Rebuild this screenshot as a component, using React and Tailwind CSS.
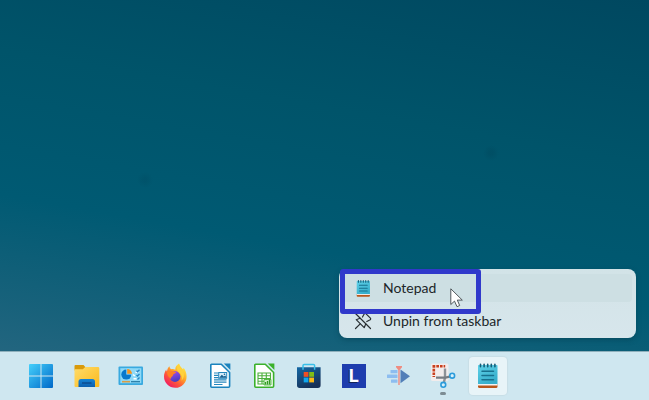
import React from "react";

function Svg({ children, className = "size-7" }) {
  return (
    <svg viewBox="0 0 28 28" className={className} aria-hidden="true">
      {children}
    </svg>
  );
}

function StartIcon() {
  return (
    <Svg>
      <defs>
        <linearGradient id="start" x1="2" y1="2" x2="26" y2="26" gradientUnits="userSpaceOnUse">
          <stop offset="0" stopColor="#45d0fb" />
          <stop offset="1" stopColor="#0068c8" />
        </linearGradient>
      </defs>
      <path fill="url(#start)" d="M3 2h10.500v11.500H2V3a1 1 0 0 1 1-1zM14.500 2H25a1 1 0 0 1 1 1v10.500H14.500zM2 14.500h11.500V26H3a1 1 0 0 1-1-1zM14.500 14.500H26V25a1 1 0 0 1-1 1H14.500z" />
    </Svg>
  );
}

function FolderIcon() {
  return (
    <Svg>
      <defs>
        <linearGradient id="folder" x1="0" y1="0" x2="1" y2="1">
          <stop offset="0" stopColor="#ffdc6a" />
          <stop offset="1" stopColor="#fbb91c" />
        </linearGradient>
        <linearGradient id="tray" x1="0" y1="0" x2="0" y2="1">
          <stop offset="0" stopColor="#1585d6" />
          <stop offset="1" stopColor="#0c5fae" />
        </linearGradient>
      </defs>
      <path fill="#d99a0b" d="M2.500 4a1 1 0 0 1 1-1h8l1.800 2v3.500H2.500z" />
      <path fill="url(#folder)" d="M2.500 7.300h8.300L13.300 5H26a1.300 1.300 0 0 1 1.300 1.300V24a1 1 0 0 1-1 1H3.500a1 1 0 0 1-1-1z" />
      <path fill="url(#tray)" d="M6.500 25v-5.500a2.500 2.500 0 0 1 2.500-2.500h11.500a2.500 2.500 0 0 1 2.500 2.500V25z" />
      <path stroke="#0a4484" strokeWidth="1.200" d="M10 21h9.500" />
    </Svg>
  );
}

function ControlPanelIcon() {
  return (
    <Svg>
      <rect x="2.500" y="4.500" width="24.500" height="18.500" rx="1" fill="#39a9df" />
      <rect x="4.300" y="6.200" width="21" height="15" fill="#8ed9f7" />
      <circle cx="10.300" cy="12.600" r="5" fill="#0878cc" />
      <path fill="#8ed9f7" d="M10.300 12.600V6.500h6v6.100z" />
      <path fill="#f5931f" d="M11.200 11.800V7a4.800 4.800 0 0 1 4.800 4.800z" />
      <path fill="none" stroke="#fff" strokeWidth="1.600" d="m17 12.500 1.800 1.500M17.500 16.800h3M19.500 10.500l3-1" />
      <path fill="none" stroke="#2384c4" strokeWidth="1.300" d="m20.500 8.800 1 1 2-2M20.500 13l1 1 2-2M21.500 17.500l2-2" />
      <path stroke="#d89c45" strokeWidth="1.600" d="M6 19.700h8" />
      <path stroke="#297ea8" strokeWidth="1.300" d="M15 19.700h9" />
    </Svg>
  );
}

function FirefoxIcon() {
  return (
    <Svg>
      <defs>
        <linearGradient id="foxBody" x1="23" y1="4" x2="6" y2="24" gradientUnits="userSpaceOnUse">
          <stop offset="0" stopColor="#fff04b" />
          <stop offset="0.350" stopColor="#ffae27" />
          <stop offset="0.650" stopColor="#ff5a38" />
          <stop offset="1" stopColor="#ef1668" />
        </linearGradient>
        <linearGradient id="foxGlobe" x1="0" y1="0" x2="0.300" y2="1">
          <stop offset="0" stopColor="#a948f0" />
          <stop offset="1" stopColor="#4a3ec0" />
        </linearGradient>
      </defs>
      <path fill="url(#foxBody)" d="M18 1.500c.6 2.700 2.500 3.800 4 5.800.4-.5.500-1 .5-1.500 2 2.200 3.100 5.500 3.100 8.700A11.300 11.300 0 0 1 3 14.600c0-2.800 1-5.200 2.200-7 .1.900.3 1.500.8 2 .2-2.300 1-4 2.500-5.400.1 1.500.8 2.300 1.700 3 1.700-.3 3 0 4.100.5-.3-2.600 1.600-4.900 3.700-6.200z" />
      <circle cx="14" cy="14.500" r="5.400" fill="url(#foxGlobe)" />
      <path fill="#ff8124" d="M6 10.300c2-1.800 4.400-2 6.800-.8 1 .1 2 .2 2.300.8-.4 1.200-2.200 1.400-2.900 2.200-.3.600-.2 1.500-.8 1.700-1 .3-1.400 1.500-1.400 2.800-2-1.500-4-3.500-4-6.700z" />
      <path fill="#ffd23c" d="M18 2c.7 3 3.300 4.700 4.500 7.700 1.200 3 .5 6.800-2 9 1-3.500 0-6.500-2.300-8.200-2.400-1.700-3.300-5.400-.2-8.500z" />
    </Svg>
  );
}

function DocShape({ color, children }) {
  return (
    <Svg>
      <path fill="#fff" stroke={color} strokeWidth="1.600" strokeLinejoin="round" d="M5.500 2.200h9.800l8.300 8.300v13.700a1 1 0 0 1-1 1H5.800a1 1 0 0 1-1-1V2.900z" />
      <path fill={color} d="M17.800 1.400h6.600V8z" />
      {children}
    </Svg>
  );
}

function WriterIcon() {
  return (
    <DocShape color="#1b83bd">
      <path stroke="#2587bd" strokeWidth="1.200" d="M8 11h4.500M8 13.300h4.500M8 15.600h4.500M8 17.900h12.500M8 20.200h12.500M8 22.500h8.500" />
      <rect x="12.700" y="10.500" width="8" height="5.800" fill="#d9eefa" stroke="#2587bd" />
      <path fill="#155f91" d="m13.200 15.800 2.600-3 2 1.800 1.500-1.200 1.300 2.400z" />
      <circle cx="18.500" cy="12.300" r="0.800" fill="#155f91" />
    </DocShape>
  );
}

function CalcIcon() {
  return (
    <DocShape color="#3bb12b">
      <path fill="none" stroke="#4caf3d" strokeWidth="1.100" d="M8 11h12.500v11H8zM8 13.800h12.500M8 16.500h12.500M8 19.200h12.500M12 11v11M16.300 11v11" />
      <path fill="#d3f0cb" stroke="#3bb12b" strokeWidth="0.800" d="M14 17.500h7V23h-7z" />
      <path stroke="#329923" strokeWidth="1.300" d="M15.500 22.500V20M17.500 22.500v-3.500M19.500 22.500v-5" />
    </DocShape>
  );
}

function StoreIcon() {
  return (
    <Svg>
      <defs>
        <linearGradient id="bag" x1="0" y1="0" x2="0.500" y2="1">
          <stop offset="0" stopColor="#1468a5" />
          <stop offset="1" stopColor="#173158" />
        </linearGradient>
      </defs>
      <path fill="url(#bag)" d="M2 5.300h23.600v17.900a2.700 2.700 0 0 1-2.700 2.700H4.700A2.700 2.700 0 0 1 2 23.200z" />
      <path fill="none" stroke="#38bfe8" strokeWidth="1.500" d="M8 7.800V3.600a1.200 1.200 0 0 1 1.200-1.200h9.200a1.200 1.200 0 0 1 1.200 1.200v4.200" />
      <path fill="#f04f24" d="M8.700 10h4.700v4.800H8.700z" />
      <path fill="#80bc16" d="M14.200 10H19v4.800h-4.800z" />
      <path fill="#10a7ee" d="M8.700 15.600h4.700v4.800H8.700z" />
      <path fill="#fcb813" d="M14.200 15.600H19v4.800h-4.800z" />
    </Svg>
  );
}

function LetterIcon() {
  return (
    <span className="flex size-6 items-center justify-center bg-[#1e3dae] font-['Inter','Liberation_Sans',sans-serif] text-[18px] leading-6 font-bold text-white [text-shadow:-1px_1px_0_#142457]">
      L
    </span>
  );
}

function EditorIcon() {
  return (
    <Svg>
      <g fill="#8dbdf0">
        <rect x="5.500" y="8" width="7" height="3.300" rx="0.500" />
        <rect x="2" y="12.500" width="10.500" height="3.500" rx="0.500" />
        <rect x="6" y="17.500" width="6.500" height="3.300" rx="0.500" />
      </g>
      <path fill="#527fb8" d="M15.500 7.500 25 14.300l-9.500 7z" />
      <path fill="#ef8c81" d="M11 4h6v1.200L14.700 8v15h-1.400V8L11 5.200z" />
    </Svg>
  );
}

function SnippingIcon() {
  return (
    <Svg>
      <rect x="2" y="1.500" width="17.500" height="17.500" rx="1.500" fill="#f2ecec" />
      <path fill="#c93f1c" d="M3.500 3h2.800v2.800H3.500zM7.300 3H10v2.600H7.300zM11 3h2.600v2.600H11zM14.600 3h1.600v2.600h-1.600zM3.500 6.800h2.600v2.600H3.500zM3.500 10.400h2.600V13H3.500zM3.500 14h2.600v1H3.500z" />
      <path fill="none" stroke="#8d9197" strokeWidth="2.400" strokeLinejoin="round" d="M16 6.500v9L15 20" />
      <path fill="none" stroke="#777c83" strokeWidth="2.400" d="M7 15.600h9.500l5-1.200" />
      <circle cx="23.200" cy="13.700" r="2.400" fill="#d7eef8" stroke="#2b9bdb" strokeWidth="1.600" />
      <circle cx="14.300" cy="22.800" r="2.400" fill="#d7eef8" stroke="#2b9bdb" strokeWidth="1.600" />
    </Svg>
  );
}

function NotepadIcon({ className }) {
  return (
    <Svg className={className}>
      <defs>
        <linearGradient id="pad" x1="0" y1="0" x2="0.500" y2="1">
          <stop offset="0" stopColor="#60d2e9" />
          <stop offset="1" stopColor="#36aecb" />
        </linearGradient>
      </defs>
      <path fill="#b9571c" d="M4 22h19.500v2.500a1.500 1.500 0 0 1-1.500 1.500H5.500A1.500 1.500 0 0 1 4 24.500z" />
      <path fill="#f1f3f3" d="M4 20h19.500v3.500H4z" />
      <path fill="url(#pad)" d="M4.500 3h18.200a.8.800 0 0 1 .8.800V22H4V3.800a.8.800 0 0 1 .5-.8z" />
      <path stroke="#145d78" strokeWidth="1.600" strokeLinecap="round" d="M6.500 2.200v2.500M10.100 2.200v2.500M13.700 2.200v2.500M17.300 2.200v2.500M20.900 2.200v2.500" />
      <path stroke="#17718e" strokeWidth="1.500" strokeLinecap="round" d="M8 9.200h11.500M8 13.500h11.500M8 17.800h11.500" />
    </Svg>
  );
}

function UnpinIcon() {
  return (
    <svg viewBox="0 0 18 18" className="size-[18px] shrink-0" fill="none" stroke="#292f32" strokeWidth="1.200" strokeLinecap="round" strokeLinejoin="round" aria-hidden="true">
      <path d="M1.500 1.500l15 15" />
      <path d="M8.500 5 10.300 1.800a1 1 0 0 1 1.500-.2l4.600 4.600a1 1 0 0 1-.2 1.500L12.800 9.500" />
      <path d="M6 6.300 2.200 7.700l8 8L11.700 12" />
      <path d="M6.200 11.800 1.500 16.500" />
    </svg>
  );
}

const apps = [
  { name: "Start", Icon: StartIcon },
  { name: "File Explorer", Icon: FolderIcon },
  { name: "Control Panel", Icon: ControlPanelIcon },
  { name: "Firefox", Icon: FirefoxIcon },
  { name: "Writer", Icon: WriterIcon },
  { name: "Calc", Icon: CalcIcon },
  { name: "Store", Icon: StoreIcon },
  { name: "L", Icon: LetterIcon },
  { name: "Video Editor", Icon: EditorIcon },
  { name: "Snipping Tool", Icon: SnippingIcon, running: true },
  { name: "Notepad", Icon: NotepadIcon, active: true },
];

function TaskbarButton({ name, Icon, running, active }) {
  return (
    <button
      type="button"
      aria-label={name}
      className={
        active
          ? "relative flex size-[38px] items-center justify-center rounded bg-[#e8f4f8] shadow-[0_0_1px_1px_#c8dee6]"
          : "relative flex size-[38px] items-center justify-center rounded"
      }
    >
      <Icon />
      {running && <span className="absolute bottom-0 left-4 h-[3px] w-1.5 rounded-full bg-[#7d8c93]" />}
    </button>
  );
}

function Cursor() {
  return (
    <svg viewBox="0 0 14 20" className="absolute top-[19px] left-[111px] h-5 w-3.5" aria-hidden="true">
      <path fill="#fff" stroke="#42484d" strokeWidth="0.900" strokeLinejoin="round" d="M.8.8v15.700l3.700-3.400 2.500 5.600 2.700-1.200-2.400-5.400h5z" />
    </svg>
  );
}

function ContextMenu() {
  const item = "flex h-7 w-full items-center gap-3 rounded pl-3 text-left";
  return (
    <div role="menu" className="relative flex w-[297px] flex-col gap-[5px] rounded-lg bg-linear-to-b from-[#d2e3e7] to-[#d7e6ec] px-1 pt-[5px] pb-[3px] text-[14px] leading-5 text-[#202629] shadow-[0_2px_5px_#063d4f80]">
      <button type="button" role="menuitem" className={item + " bg-[#cddfe3]"}>
        <span className="flex w-4 justify-center">
          <NotepadIcon className="size-[19px] shrink-0" />
        </span>
        Notepad
      </button>
      <button type="button" role="menuitem" className={item}>
        <span className="flex w-4 justify-center">
          <UnpinIcon />
        </span>
        Unpin from taskbar
      </button>
      <div className="pointer-events-none absolute top-0 left-px h-[45px] w-[141px] rounded-[3px] border-[5px] border-[#3039cb]" />
      <Cursor />
    </div>
  );
}

export default function App() {
  return (
    <div className="flex min-h-screen flex-col bg-[radial-gradient(circle_at_491px_153px,#003f5440_2px,transparent_8px),radial-gradient(circle_at_145px_180px,#003f5430_2px,transparent_8px),linear-gradient(190deg,#004860_0%,#00546a_32%,#005a73_60%,#105f78_74%,#246680_92%)] font-['Lato','Open_Sans',sans-serif]">
      <main className="flex flex-1 items-end justify-end pr-[13px] pb-[13px]">
        <ContextMenu />
      </main>
      <nav aria-label="Taskbar" className="h-[49px] border-t border-[#8fb0bc] bg-[#cfe7f0] pt-[5px] pl-[22px]">
        <div className="flex w-[485px] justify-between">
          {apps.map((app) => (
            <TaskbarButton key={app.name} {...app} />
          ))}
        </div>
      </nav>
    </div>
  );
}
